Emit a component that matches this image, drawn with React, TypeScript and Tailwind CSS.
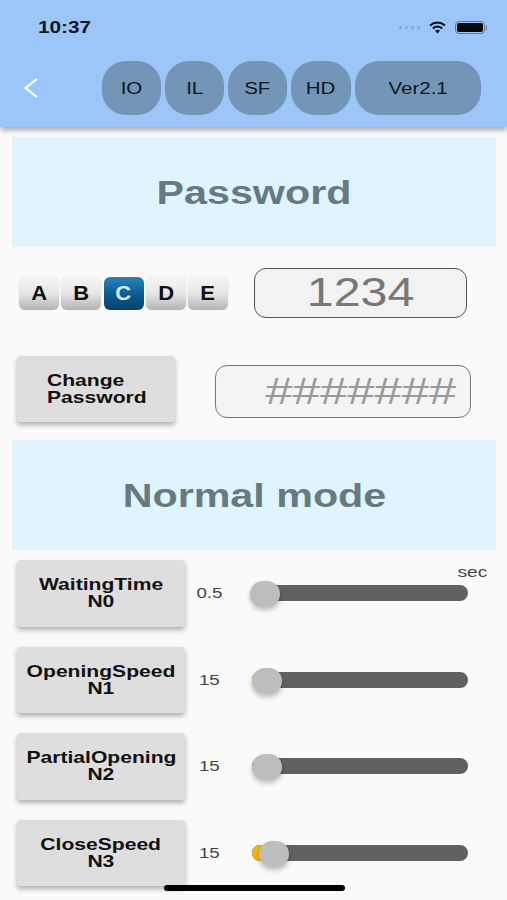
const font = { fontFamily: '"Liberation Sans", Arial, sans-serif' }

const tabs = [
  { label: 'IO', width: 'w-[59px]' },
  { label: 'IL', width: 'w-[59px]' },
  { label: 'SF', width: 'w-[59px]' },
  { label: 'HD', width: 'w-[60px]' },
  { label: 'Ver2.1', width: 'w-[126px]' },
]

const letters = ['A', 'B', 'C', 'D', 'E']

const params = [
  { name: 'WaitingTime', code: 'N0', value: '0.5', thumb: 'left-[-2px]', fill: '' },
  { name: 'OpeningSpeed', code: 'N1', value: '15', thumb: 'left-[0px]', fill: 'w-[14px]' },
  { name: 'PartialOpening', code: 'N2', value: '15', thumb: 'left-[0px]', fill: '' },
  { name: 'CloseSpeed', code: 'N3', value: '15', thumb: 'left-[7px]', fill: 'w-[20px]' },
]

function StatusBar() {
  return (
    <div className="flex h-[53px] items-center justify-between pl-[38px] pr-[20px] pt-[2px]">
      <span className="origin-left scale-x-[1.22] text-[17px] font-bold text-[#10151c]">10:37</span>
      <div className="flex items-center">
        <div className="mr-[9px] flex gap-[3px]">
          {[0, 1, 2, 3].map((i) => (
            <span key={i} className="h-[3px] w-[3px] rounded-full bg-[#8aa5c5]" />
          ))}
        </div>
        <svg width="17" height="13" viewBox="0 0 17 13" className="mr-[9px]">
          <path d="M1 4.5C5.5 .6 11.5 .6 16 4.5" fill="none" stroke="#0b0f14" strokeWidth="2" />
          <path d="M3.8 7.5c2.8-2.3 6.6-2.3 9.4 0" fill="none" stroke="#0b0f14" strokeWidth="2" />
          <path d="M6 9.6c1.5-1 3.5-1 5 0L8.5 12.4z" fill="#0b0f14" />
        </svg>
        <div className="flex items-center gap-[1px]">
          <div className="h-[13px] w-[30px] rounded-[4px] border border-[#5d7691] p-[1px]">
            <div className="h-full w-full rounded-[2px] bg-[#05070a]" />
          </div>
          <span className="h-[4px] w-[1px] bg-[#5d7691]" />
        </div>
      </div>
    </div>
  )
}

function Header() {
  return (
    <header className="relative z-10 h-[127px] bg-[#9bc6f7] shadow-[0_3px_6px_rgba(0,0,0,0.35)]">
      <StatusBar />
      <div className="flex items-center pt-[8px]">
        <svg width="18" height="24" viewBox="0 0 18 24" className="ml-[22px] mr-[62px]">
          <path d="M15 3 3.5 12 15 21" fill="none" stroke="#fff" strokeWidth="2.2" />
        </svg>
        <div className="flex gap-[4px]">
          {tabs.map((t) => (
            <div
              key={t.label}
              className={`flex h-[54px] ${t.width} items-center justify-center rounded-[24px] bg-[#7395b8] pt-[1px] text-[16px] text-[#10161d]`}
            >
              <span className="scale-x-[1.28]">{t.label}</span>
            </div>
          ))}
        </div>
      </div>
    </header>
  )
}

function Banner({ title }: { title: string }) {
  return (
    <div className="ml-[12px] mr-[11px] flex h-[110px] items-center justify-center bg-[#e0f4fd] pt-[1px] text-[33px] font-bold text-[#667a81]">
      <span className="scale-x-[1.25]">{title}</span>
    </div>
  )
}

function LetterKeys() {
  return (
    <div className="flex gap-[2.25px]">
      {letters.map((l) => (
        <div
          key={l}
          className={
            l === 'C'
              ? 'flex h-[33px] w-[40px] items-center justify-center rounded-[6px] bg-gradient-to-b from-[#2a84b8] via-[#0b5f93] to-[#0a4069] text-[20px] font-bold text-[#d5ecf7]'
              : 'flex h-[33px] w-[40px] items-center justify-center rounded-[6px] bg-gradient-to-b from-[#f6f6f6] via-[#e6e6e6] to-[#b4b4b4] text-[20px] font-bold text-[#111] shadow-[0_0_1px_rgba(0,0,0,0.3)]'
          }
        >
          <span className="scale-x-[1.1]">{l}</span>
        </div>
      ))}
    </div>
  )
}

function GrayButton({ lines, width, left }: { lines: string[]; width: string; left?: boolean }) {
  return (
    <div
      className={`flex h-full min-h-[66px] ${width} shrink-0 flex-col justify-center rounded-[4px] bg-[#dedede] text-[17px] font-bold leading-[17px] text-[#111] shadow-[0_3px_5px_rgba(0,0,0,0.3)] ${left ? 'items-start pl-[30px]' : 'items-center'}`}
    >
      {lines.map((line) => (
        <span key={line} className={`scale-x-[1.24] ${left ? 'origin-left' : ''}`}>
          {line}
        </span>
      ))}
    </div>
  )
}

function ParamRow({ name, code, value, thumb, fill }: (typeof params)[number]) {
  return (
    <div className="flex h-[66.5px] items-center">
      <GrayButton lines={[name, code]} width="w-[168px]" />
      <div className="flex w-[48px] justify-center text-[15px] text-[#444]">
        <span className="scale-x-[1.25]">{value}</span>
      </div>
      <div className="relative ml-[19px] h-[16px] w-[216px] rounded-full bg-[#616161]">
        {fill && <span className={`absolute left-0 top-0 h-[16px] ${fill} rounded-full bg-[#f2b40f]`} />}
        <span
          className={`absolute ${thumb} top-[-4px] h-[26px] w-[30px] rounded-full bg-[#bdbdbd] shadow-[0_3px_5px_rgba(0,0,0,0.25)]`}
        />
      </div>
    </div>
  )
}

export default function App() {
  return (
    <div className="relative h-[900px] w-[507px] overflow-hidden bg-[#fafafa]" style={font}>
      <Header />
      <div className="pt-[10px]">
        <Banner title="Password" />
        <div className="flex items-center pl-[19px] pt-[21px]">
          <LetterKeys />
          <div className="ml-[26px] flex h-[50px] w-[213px] items-center justify-center rounded-[12px] border border-[#555] bg-[#f2f2f2] text-[41px] text-[#777]">
            <span className="scale-x-[1.18]">1234</span>
          </div>
        </div>
        <div className="flex items-center pl-[17px] pt-[38px]">
          <GrayButton lines={['Change', 'Password']} width="w-[158px]" left />
          <div className="ml-[40px] mt-[5px] flex h-[53px] w-[256px] items-center justify-end rounded-[12px] border border-[#777] bg-[#f4f4f4] pr-[14px] text-[36px] text-[#999]">
            <span className="origin-right scale-x-[1.36]">#######</span>
          </div>
        </div>
        <div className="pt-[18px]">
          <Banner title="Normal mode" />
        </div>
        <div className="relative flex flex-col gap-[20px] pl-[17px] pt-[10px]">
          <span className="absolute right-[20px] top-[11px] origin-right scale-x-[1.28] text-[15px] text-[#444]">sec</span>
          {params.map((p) => (
            <ParamRow key={p.code} {...p} />
          ))}
        </div>
      </div>
      <div className="absolute left-[164px] top-[885px] h-[6px] w-[181px] rounded-full bg-black" />
    </div>
  )
}
